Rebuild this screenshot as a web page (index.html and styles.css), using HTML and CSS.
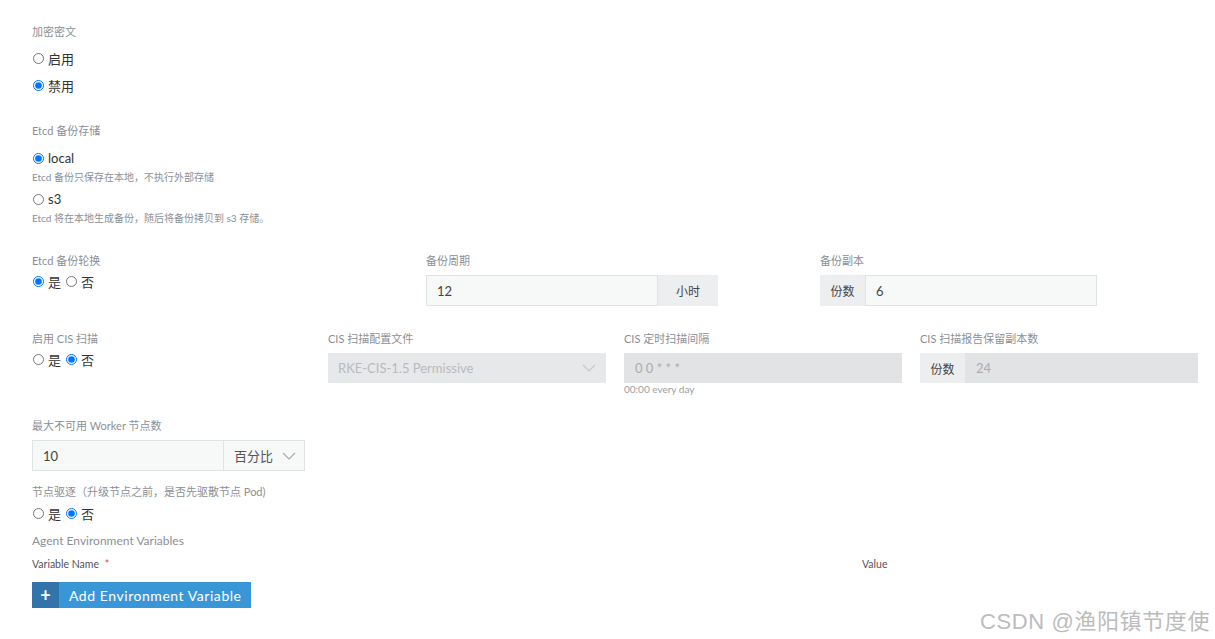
FILE: index.html
```html
<!DOCTYPE html>
<html lang="zh-CN">
<head>
    <meta charset="UTF-8">
    <meta name="viewport" content="width=device-width, initial-scale=1.0">
    <title>Cluster Options</title>
    <link rel="stylesheet" href="styles.css">
</head>
<body>
    <div class="container">
        <div class="field">
            <p class="label">加密密文</p>
            <label class="radio-row tall"><input type="radio" name="encrypt"> 启用</label>
            <label class="radio-row tall"><input type="radio" name="encrypt" checked> 禁用</label>
        </div>

        <div class="field storage">
            <p class="label">Etcd 备份存储</p>
            <label class="radio-row"><input type="radio" name="backup" checked> local</label>
            <p class="help">Etcd 备份只保存在本地，不执行外部存储</p>
            <label class="radio-row second"><input type="radio" name="backup"> s3</label>
            <p class="help">Etcd 将在本地生成备份，随后将备份拷贝到 s3 存储。</p>
        </div>

        <div class="row cols-3">
            <div class="col">
                <p class="label">Etcd 备份轮换</p>
                <div class="radio-inline">
                    <label><input type="radio" name="rotate" checked> 是</label>
                    <label><input type="radio" name="rotate"> 否</label>
                </div>
            </div>
            <div class="col">
                <p class="label">备份周期</p>
                <div class="input-group">
                    <input type="text" class="input-field w232" value="12">
                    <span class="addon addon-right">小时</span>
                </div>
            </div>
            <div class="col">
                <p class="label">备份副本</p>
                <div class="input-group">
                    <span class="addon">份数</span>
                    <input type="text" class="input-field w232" value="6">
                </div>
            </div>
        </div>

        <div class="row cols-4">
            <div class="col">
                <p class="label">启用 CIS 扫描</p>
                <div class="radio-inline">
                    <label><input type="radio" name="cis"> 是</label>
                    <label><input type="radio" name="cis" checked> 否</label>
                </div>
            </div>
            <div class="col">
                <p class="label">CIS 扫描配置文件</p>
                <div class="select disabled">
                    <span>RKE-CIS-1.5 Permissive</span>
                    <svg class="chevron" width="14" height="8" viewBox="0 0 14 8"><path d="M1 1l6 6 6-6" fill="none" stroke="#c4c7ca" stroke-width="1.1"/></svg>
                </div>
            </div>
            <div class="col">
                <p class="label">CIS 定时扫描间隔</p>
                <input type="text" class="input-field disabled-input w278" value="0 0 * * *" disabled>
                <p class="help small">00:00 every day</p>
            </div>
            <div class="col">
                <p class="label">CIS 扫描报告保留副本数</p>
                <div class="input-group">
                    <span class="addon">份数</span>
                    <input type="text" class="input-field disabled-input w233" value="24" disabled>
                </div>
            </div>
        </div>

        <div class="field worker">
            <p class="label">最大不可用 Worker 节点数</p>
            <div class="input-group">
                <input type="text" class="input-field w192" value="10">
                <div class="select unit">
                    <span>百分比</span>
                    <svg class="chevron" width="14" height="8" viewBox="0 0 14 8"><path d="M1 1l6 6 6-6" fill="none" stroke="#a4a8ad" stroke-width="1.1"/></svg>
                </div>
            </div>
        </div>

        <div class="field drain">
            <p class="label">节点驱逐（升级节点之前，是否先驱散节点 Pod)</p>
            <div class="radio-inline">
                <label><input type="radio" name="drain"> 是</label>
                <label><input type="radio" name="drain" checked> 否</label>
            </div>
        </div>

        <div class="env">
            <p class="label">Agent Environment Variables</p>
            <div class="env-head">
                <span class="env-name">Variable Name <span class="required">*</span></span>
                <span class="env-value">Value</span>
            </div>
            <button class="btn-add"><span class="btn-icon">+</span><span class="btn-text">Add Environment Variable</span></button>
        </div>
    </div>
    <div class="watermark">CSDN @渔阳镇节度使</div>
</body>
</html>
```

FILE: styles.css
```css
body {
    margin: 0;
    background: #fff;
    font-family: Lato, "Noto Sans CJK SC", sans-serif;
    color: #444;
}
p {
    margin: 0;
}
.container {
    padding: 24px 0 0 32px;
}
.label {
    font-size: 11px;
    line-height: 16px;
    color: #8c9096;
}
.help {
    font-size: 10px;
    line-height: 14px;
    color: #8c9096;
    margin-top: 2px;
}
.help.small {
    line-height: 12px;
    margin-top: 0;
    color: #9a9ea3;
}
.field .label + .radio-row {
    margin-top: 5px;
}
.radio-row {
    display: flex;
    align-items: center;
    height: 20px;
    font-size: 13px;
    color: #333;
}
.radio-row.tall {
    height: 27px;
    margin-top: 0;
}
.storage {
    margin-top: 24px;
}
.storage .label + .radio-row {
    margin-top: 9px;
}
.radio-row.second {
    margin-top: 5px;
}
input[type="radio"] {
    width: 11px;
    height: 11px;
    margin: 0 4px 0 1px;
}
.radio-inline {
    display: flex;
    align-items: center;
    height: 20px;
    margin-top: 3px;
    font-size: 13px;
    color: #333;
}
.radio-inline label {
    display: flex;
    align-items: center;
    margin-right: 4px;
}
.row {
    display: grid;
}
.cols-3 {
    grid-template-columns: repeat(3, 394px);
    margin-top: 28px;
}
.cols-4 {
    grid-template-columns: repeat(4, 296px);
    margin-top: 25px;
}
.col .label {
    margin-bottom: 6px;
}
.col .radio-inline {
    margin-top: -4px;
}
.input-group {
    display: flex;
}
.input-field {
    box-sizing: border-box;
    height: 31px;
    border: 1px solid #dfe3e6;
    background: #f7f9f9;
    padding: 0 10px;
    font-family: Lato, "Noto Sans CJK SC", sans-serif;
    font-size: 13px;
    color: #444;
    outline: none;
}
.cols-4 .input-field {
    height: 30px;
}
.w192 { width: 192px; }
.w232 { width: 232px; }
.w233 { width: 233px; }
.w278 { width: 278px; }
.disabled-input {
    background: #e1e3e5;
    border-color: #e1e3e5;
    color: #a9adb1;
}
.addon {
    display: flex;
    align-items: center;
    justify-content: center;
    width: 45px;
    background: #eceef0;
    font-size: 12px;
    color: #444;
}
.addon-right {
    width: 60px;
}
.select {
    box-sizing: border-box;
    display: flex;
    align-items: center;
    justify-content: space-between;
    height: 30px;
    padding: 0 10px;
    font-size: 13px;
}
.select.disabled {
    width: 278px;
    background: #e6e8ea;
    color: #b8bbbf;
}
.select.unit {
    width: 81px;
    height: 31px;
    border: 1px solid #dfe3e6;
    border-left: 0;
    background: #f7f9f9;
    color: #555;
    padding: 0 8px 0 10px;
}
.worker {
    margin-top: 23px;
}
.worker .label {
    margin-bottom: 6px;
}
.drain {
    margin-top: 13px;
}
.drain .radio-inline {
    margin-top: 3px;
}
.env {
    margin-top: 10px;
}
.env .label {
    font-size: 12px;
}
.env-head {
    display: flex;
    margin-top: 7px;
    font-size: 10.5px;
    line-height: 16px;
    color: #555;
}
.env-name {
    width: 830px;
}
.required {
    color: #e04848;
    margin-left: 3px;
}
.btn-add {
    display: flex;
    margin-top: 10px;
    padding: 0;
    border: 0;
    height: 26px;
    background: #3a97d7;
    color: #fff;
    font-family: Lato, sans-serif;
    font-size: 14px;
    cursor: pointer;
}
.btn-icon {
    display: flex;
    align-items: center;
    justify-content: center;
    width: 27px;
    height: 26px;
    background: #3273ab;
    font-size: 18px;
    font-weight: bold;
}
.btn-text {
    display: flex;
    align-items: center;
    padding: 0 9px 0 10px;
    height: 26px;
    letter-spacing: 0.55px;
}
.watermark {
    position: absolute;
    right: 5px;
    top: 603px;
    font-family: "Liberation Sans", "Noto Sans CJK SC", sans-serif;
    font-size: 22px;
    letter-spacing: 0.6px;
    color: #bcbcbc;
}
```
